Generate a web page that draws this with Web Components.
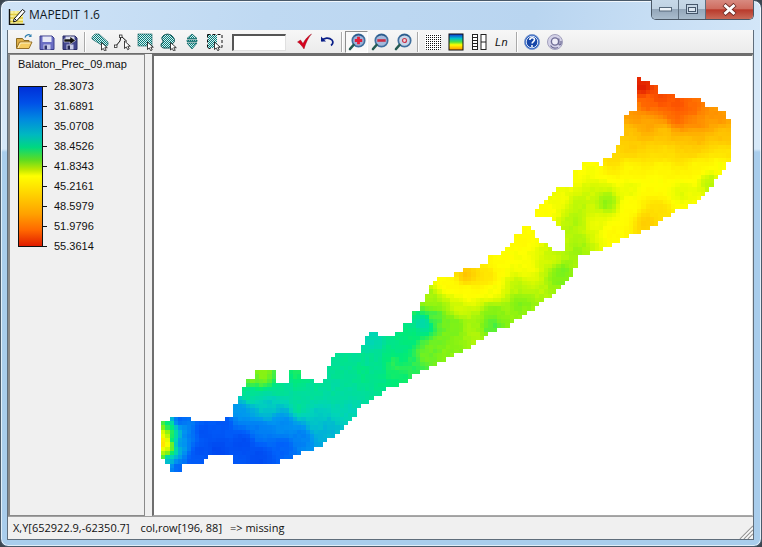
<!DOCTYPE html>
<html><head><meta charset="utf-8"><style>
html,body{margin:0;padding:0;background:#3c4650;width:762px;height:547px;overflow:hidden}
</style></head><body>
<app-window>
  <title-bar slot="title">MAPEDIT 1.6</title-bar>
  <tool-bar slot="tools">
    <tool-button icon="open"></tool-button><tool-button icon="save"></tool-button><tool-button icon="saveas"></tool-button>
    <tool-sep></tool-sep>
    <tool-button icon="sel1"></tool-button><tool-button icon="sel2"></tool-button><tool-button icon="sel3"></tool-button><tool-button icon="sel4"></tool-button><tool-button icon="sel5"></tool-button><tool-button icon="sel6"></tool-button>
    <tool-field></tool-field>
    <tool-button icon="check"></tool-button><tool-button icon="undo"></tool-button>
    <tool-sep></tool-sep>
    <tool-button icon="zin" pressed></tool-button><tool-button icon="zout"></tool-button><tool-button icon="zfit"></tool-button>
    <tool-sep></tool-sep>
    <tool-button icon="grid"></tool-button><tool-button icon="ramp"></tool-button><tool-button icon="cols"></tool-button><tool-button icon="ln"></tool-button>
    <tool-sep></tool-sep>
    <tool-button icon="help"></tool-button><tool-button icon="at"></tool-button>
  </tool-bar>
  <legend-panel slot="side" name="Balaton_Prec_09.map" values="28.3073,31.6891,35.0708,38.4526,41.8343,45.2161,48.5979,51.9796,55.3614"></legend-panel>
  <map-view slot="main"></map-view>
  <status-bar slot="status"><span>X,Y[652922.9,-62350.7]</span><span style="margin-left:11px">col,row[196, 88]</span><span style="margin-left:8px">=&gt; missing</span></status-bar>
</app-window>
<script>
const def=(n,css,html,extra)=>{customElements.define(n,class extends HTMLElement{
  constructor(){super();this.attachShadow({mode:'open'}).innerHTML='<style>'+css+'</style>'+html;}
  connectedCallback(){if(extra)extra.call(this,this.shadowRoot);}
});};

def('app-window',`
:host{display:block;width:762px;height:547px;box-sizing:border-box;position:relative;font-family:"Liberation Sans",Arial,sans-serif;}
.f{width:100%;height:100%;box-sizing:border-box;border-radius:8px;border:1px solid #4a5a6a;
 background:linear-gradient(#d6e8f8 0,#d6e8f8 148px,#a9cdec 151px,#a9cdec 100%);
 display:flex;flex-direction:column;padding:0 8px 7px 7px;
 box-shadow:inset 0 0 0 1px rgba(255,255,255,.65);}
.side-tint{flex:1;display:flex;flex-direction:column;min-height:0;background:#f0f0f0;outline:1px solid #5f6d7b;}
.w{flex:1;display:flex;min-height:0;background:#f0f0f0;}
`,`<div class="f"><slot name="title"></slot><div class="side-tint"><slot name="tools"></slot>
<div class="w"><slot name="side"></slot><slot name="main"></slot></div><slot name="status"></slot></div></div>`);

def('title-bar',`
:host{display:flex;align-items:flex-start;height:28px;flex:none;position:relative;font:12px "Open Sans","Liberation Sans",sans-serif;color:#10181f;
 margin:1px -7px 0 -6px;padding-left:6px;background:linear-gradient(100deg,#cfe3f7 0,#bfd9f2 35%,#b9d5f0 70%,#d3e6f8 100%);border-radius:7px 7px 0 0;}
svg.i{width:18px;height:18px;margin:5px 3px 0 0;flex:none}
span{margin-top:4px;line-height:17px}
.caps{position:absolute;right:6px;top:-2px;display:flex;height:20px;border:1px solid #4a5866;border-top:0;border-radius:0 0 5px 5px;overflow:hidden;box-sizing:border-box}
.caps i{display:flex;align-items:center;justify-content:center;box-sizing:border-box;height:100%}
.min{width:27px;background:linear-gradient(#c6d8e8 0,#c0d2e2 45%,#94a7ba 50%,#a9bccd 100%);border-right:1px solid #5e6e7e}
.max{width:27px;background:linear-gradient(#c6d8e8 0,#c0d2e2 45%,#94a7ba 50%,#a9bccd 100%);border-right:1px solid #5e6e7e}
.cl{width:47px;background:linear-gradient(#d88a80 0,#cf6d60 45%,#b93a2c 52%,#c96a58 100%)}
`,`<svg class="i" viewBox="0 0 18 18"><rect x="2" y="4" width="13" height="13" fill="#f8f2a0"/>
<path d="M2 7.500h13M2 11h13M2 14.500h13" stroke="#e0c93c" stroke-width="1.300"/><path d="M6 4v13M10 4v13" stroke="#e8d860" stroke-width=".8"/>
<path d="M1.500 2v15.500h15" fill="none" stroke="#111" stroke-width="1.400"/>
<path d="M6 12 14.500 2.500l2.500 2-8.500 9.500-3 .8z" fill="#fff" stroke="#111"/><path d="M6.500 11.500l2 2" stroke="#111"/></svg>
<span><slot></slot></span>
<div class="caps"><i class="min"><svg width="13" height="5"><rect x=".5" y=".5" width="12" height="3.500" fill="#eef3f8" stroke="#56687a"/></svg></i>
<i class="max"><svg width="12" height="11"><rect x=".5" y=".5" width="11" height="9" fill="#c6d6e5" stroke="#45566a"/><rect x="2.500" y="3.500" width="7" height="4" fill="#dde7f1" stroke="#45566a"/></svg></i>
<i class="cl"><svg width="15" height="13" viewBox="0 0 15 13"><path d="M2 1.500 13 11.500M13 1.500 2 11.500" stroke="#6b2b25" stroke-width="4.500"/><path d="M2.500 2 12.500 11M12.500 2 2.500 11" stroke="#fff" stroke-width="3"/></svg></i></div>`);

def('tool-bar',`
:host{display:flex;align-items:center;height:24px;flex:none;box-sizing:border-box;padding:1px 0 0 4px;
 background:linear-gradient(#f7f7f7,#ebebeb);border-bottom:1px solid #6d6d6d;}
`,`<slot></slot>`);

def('tool-sep',`:host{display:block;flex:none;width:7px;height:20px;position:relative}
i{display:block;width:1px;height:100%;background:#a9a9a9;margin-left:3px;box-shadow:1px 0 #fff}`,`<i></i>`);

def('tool-field',`:host{display:block;flex:none;width:54px;height:17px;margin:0 6px;box-sizing:border-box;background:#fff;
 border:1px solid #e0e0e0;border-top:2px solid #555;border-left:2px solid #555}`,``);

const T=`<pattern id="d" width="2" height="2" patternUnits="userSpaceOnUse"><rect width="2" height="2" fill="#d8f2f0"/><rect width="1" height="1" fill="#067a7a"/><rect x="1" y="1" width="1" height="1" fill="#067a7a"/></pattern>`;
const CUR=(x,y)=>`<path transform="translate(${x} ${y})" d="M0 0v7.500l1.800-1.600 1.400 2.800 1.500-.8-1.400-2.700h2.500z" fill="#fff" stroke="#111" stroke-width=".8"/>`;
const MAG=(c,sym)=>`<circle cx="10.500" cy="7.500" r="6.200" fill="${c}" stroke="#3f6f9e" stroke-width="1.700"/><path d="M6.500 3.300a6 6 0 0 1 8 0" stroke="#1f4f80" fill="none"/>${sym}<path d="M5.500 12 2 16" stroke="#245a52" stroke-width="2.600" stroke-linecap="round"/>`;
const ICONS={
open:`<path d="M1.500 15V5.500h6l1.500 2h5v2" fill="#e0b048" stroke="#8a6a20"/><path d="M1.500 15.500 4.500 9h12.500l-3 6.500z" fill="#f6cc60" stroke="#96702a"/><path d="M3 15l2.500-5h10" stroke="#fff3c4" fill="none"/><path d="M10 4.500c1-3 4-3.500 5.500-2" stroke="#2f7fb0" stroke-width="1.200" fill="none"/><path d="M16.500 1v3h-3z" fill="#2f7fb0"/>`,
save:`<path d="M2 3h12l2 2v11.500H2z" fill="#6a6ec4" stroke="#3a3c8a"/><rect x="4.500" y="3.500" width="9" height="5.500" fill="#e6e8f6"/><rect x="5.500" y="11.500" width="7" height="5" fill="#c9cce8"/><rect x="6.500" y="12.500" width="2.500" height="4" fill="#30336f"/>`,
saveas:`<path d="M2 3h12l2 2v11.500H2z" fill="#43478f" stroke="#2a2c66"/><rect x="4.500" y="3.500" width="9" height="5" fill="#d8dbf0"/><rect x="5.500" y="11.500" width="7" height="5" fill="#c9cce8"/><rect x="6.500" y="12.500" width="2.500" height="4" fill="#22254f"/><path d="M3 6h6V3.500l5.500 4-5.500 4V9H3z" fill="#111" stroke="#fff" stroke-width=".5"/>`,
sel1:`${T}<path d="M1 4 4 1h4l9 8v3l-3 2L4 8 1 6z" fill="url(#d)" stroke="#0a5c5c" stroke-width=".6"/>${CUR(10.500,9.500)}`,
sel2:`<path d="M1.500 13.500 6 8l1-5 6 5.500" fill="none" stroke="#111"/><rect x=".5" y="12" width="2.500" height="2.500" fill="#fff" stroke="#111" stroke-width=".7"/><rect x="5.500" y="2" width="2.500" height="2.500" fill="#fff" stroke="#111" stroke-width=".7"/>${CUR(10.500,8)}`,
sel3:`${T}<rect x="1" y="1" width="14" height="12" fill="url(#d)" stroke="#0a5c5c" stroke-width=".6"/>${CUR(10.500,9)}`,
sel4:`${T}<path d="M3 3c3-3 8-2 10 1 2 2 2 5 0 6-2 2 0 5-4 5-3 0-8 1-8-3 0-3 3-2 2-4S1 5 3 3z" fill="url(#d)" stroke="#0a5050"/>${CUR(10.500,9.500)}`,
sel5:`${T}<path d="M9 1l5 4.500H4zM4 7h10v1.500H4zM4 10h10l-5 6z" fill="url(#d)" stroke="#076464" stroke-width=".8"/>`,
sel6:`${T}<rect x="2" y="2" width="9" height="13" fill="url(#d)"/><path d="M1.500 1.500h14.500v13h-3M1.500 1.500V15.500h3" fill="none" stroke="#111" stroke-dasharray="3 2"/>${CUR(8.500,9)}`,
check:`<path d="M2.500 9 5.500 7l2.500 3.500C10 6.500 12.500 3.500 16.500 1c-3 3.500-5.500 8-7.500 15C7 13 5 10.500 2.500 9z" fill="#d8001c" stroke="#8d0012" stroke-width=".4"/>`,
undo:`<path d="M3 3.500v5h5" fill="#0a1f88" /><path d="M3.500 8C6 4.500 11 4 14 7c1.500 2 .8 4-1 5.500" fill="none" stroke="#0a1f88" stroke-width="1.700"/>`,
zin:MAG('#9cb2d8','<path d="M6.800 7.500h7.400M10.500 3.800v7.400" stroke="#e21f3a" stroke-width="2.800"/>'),
zout:MAG('#a3b9dc','<path d="M6.300 7.500h8.400" stroke="#c92c44" stroke-width="2.600"/>'),
zfit:MAG('#c6d6ea','<circle cx="10.500" cy="7.500" r="2" fill="#f2d4da" stroke="#c8374e" stroke-width="1.200"/>'),
grid:`<pattern id="g" width="2" height="2" patternUnits="userSpaceOnUse"><rect width="1" height="1" fill="#111"/></pattern><rect x="1" y="1" width="16" height="16" rx="2.500" fill="#fff"/><rect x="1" y="1" width="16" height="16" rx="2.500" fill="url(#g)"/>`,
ramp:`<defs><linearGradient id="r" x1="0" y1="0" x2="0" y2="1"><stop offset="0" stop-color="#1030d8"/><stop offset=".28" stop-color="#00c0c8"/><stop offset=".5" stop-color="#50e040"/><stop offset=".68" stop-color="#ffff00"/><stop offset="1" stop-color="#ff9000"/></linearGradient></defs><rect x="2" y="1" width="14" height="16" fill="url(#r)" stroke="#111"/>`,
cols:`<rect x="2.500" y="1.500" width="5" height="15" fill="#fff" stroke="#222"/><path d="M2.500 4.500h5M2.500 7.500h5M2.500 10.500h5M2.500 13.500h5" stroke="#222"/><rect x="11" y="1.500" width="5" height="15" fill="#fff" stroke="#222"/><path d="M11 9h5" stroke="#222"/>`,
ln:``,
help:`<circle cx="9" cy="9" r="7.500" fill="#2a5fc0" stroke="#7d9bcf"/><circle cx="9" cy="9" r="5.800" fill="#1747a8" stroke="#dce6f6"/><path d="M6.800 7c0-3 4.700-3 4.700-.3 0 1.900-2.400 1.800-2.400 3.700" fill="none" stroke="#fff" stroke-width="1.600"/><circle cx="9" cy="13" r="1" fill="#fff"/>`,
at:`<circle cx="9" cy="9" r="7.500" fill="#d4d2e8" stroke="#a3a1bd"/><circle cx="9" cy="8.500" r="3.600" fill="#efeef8" stroke="#6f6d96" stroke-width="1.400"/><path d="M12.800 5.500v5c0 2 2.200 1.500 2.200 0V8M12 14.500c-3 1.200-6 .5-7.500-2" fill="none" stroke="#6f6d96" stroke-width="1.300"/>`
};
customElements.define('tool-button',class extends HTMLElement{
  constructor(){super();const s=this.attachShadow({mode:'open'});
    const n=this.getAttribute('icon');
    const body=n==='ln'?`<span>Ln</span>`:`<svg width="18" height="18" viewBox="0 0 18 18">${ICONS[n]}</svg>`;
    s.innerHTML=`<style>:host{display:flex;align-items:center;justify-content:center;flex:none;width:23px;height:22px;box-sizing:border-box}
    :host([pressed]){background:#f9f9f9;border:1px solid;border-color:#8e8e8e #fff #fff #8e8e8e}
    span{font:italic 11px "Liberation Sans",sans-serif;color:#111;letter-spacing:.5px}svg{display:block}</style>${body}`;}
});

def('legend-panel',`
:host{display:block;flex:none;width:137px;box-sizing:border-box;background:#f0f0f0;border:1px solid #8a8a8a;border-left-width:2px;border-top-width:1px;
 font:11px "Liberation Sans",Arial,sans-serif;color:#111;padding:3px 0 0 8px;margin-right:7px;}
.n{line-height:13px;height:14px;white-space:pre;}
.l{display:flex;margin-top:14px;}
.bar{width:23px;height:159px;flex:none;border:1px solid #111;background:linear-gradient(#0030d8 0,#0050e8 10%,#0088e0 20%,#00b8c0 30%,#00d880 38%,#60dc20 46%,#c0e800 52%,#ffff00 56%,#ffd000 68%,#ffa000 80%,#ff6800 90%,#e01c00 100%)}
.t{width:4px;height:161px;flex:none;display:flex;flex-direction:column;justify-content:space-between}
.t i{display:block;height:1px;background:#111}
.v{margin-left:7px;margin-top:-7px;flex:none;display:flex;flex-direction:column}
.v div{height:20px;flex:none;line-height:14px}
`,`<div class="n"></div><div class="l"><div class="bar"></div><div class="t"></div><div class="v"></div></div>`,function(s){
  s.querySelector('.n').textContent=this.getAttribute('name');
  const vs=this.getAttribute('values').split(',');
  s.querySelector('.t').innerHTML=vs.map(()=>'<i></i>').join('');
  s.querySelector('.v').innerHTML=vs.map(v=>`<div>${v}</div>`).join('');
});

def('status-bar',`
:host{display:flex;align-items:center;flex:none;height:23px;box-sizing:border-box;background:#f0f0f0;border-top:1px solid #a0a0a0;position:relative;
 font:11px "Open Sans","Liberation Sans",sans-serif;color:#111;padding:0 0 1px 5px;white-space:pre;}
svg{position:absolute;right:0;bottom:0}
`,`<slot></slot><svg width="14" height="14" viewBox="0 0 14 14"><path d="M1 14 14 1M5 14 14 5M9 14 14 9" stroke="#9a9a9a" stroke-width="1.200"/><path d="M2.500 14 14 2.500M6.500 14 14 6.500M10.500 14 14 10.500" stroke="#fff"/></svg>`);

/* ---- map ---- */
const OUT=[[640,77],[642,81],[655,85],[661,93],[674,94],[674,98],[700,98],[704,103],[704,107],[717,107],[726,114],[730,120],[730,157],[725,168],[717,177],[712,188],[703,197],[690,205],[673,212],[657,225],[647,230],[623,238],[610,247],[585,255],[577,257],[575,273],[560,287],[537,307],[507,327],[490,332],[477,342],[460,352],[437,363],[417,373],[410,380],[385,390],[370,400],[358,410],[352,418],[342,430],[332,438],[315,448],[293,457],[277,462],[233,462],[233,457],[208,457],[200,465],[182,465],[182,470],[170,470],[170,465],[165,465],[161,457],[161,423],[170,420],[170,415],[191,415],[191,419],[217,419],[221,423],[222,419],[234,418],[234,406],[238,398],[243,389],[247,383],[247,377],[255,377],[255,372],[277,372],[277,381],[289,381],[289,372],[302,372],[302,377],[315,377],[315,381],[324,381],[328,368],[333,358],[336,355],[358,355],[360,351],[367,338],[372,333],[378,333],[382,337],[402,332],[405,325],[413,320],[413,312],[422,307],[423,298],[430,287],[440,278],[453,275],[465,269],[478,269],[478,265],[490,263],[490,257],[502,252],[512,243],[512,235],[520,233],[527,222],[537,233],[537,240],[547,245],[553,250],[563,252],[567,240],[560,225],[547,217],[537,217],[537,210],[547,200],[558,188],[572,187],[572,171],[583,171],[583,162],[597,162],[602,167],[603,158],[613,154],[618,145],[623,135],[623,125],[627,112],[640,107],[636,102],[636,82]];
const CP=[[642,85,1],[660,97,.93],[677,105,.92],[690,108,.88],[677,115,.88],[697,122,.82],[717,115,.8],[647,105,.88],[637,115,.8],[647,122,.77],[630,132,.72],[663,135,.72],[697,138,.74],[723,138,.72],[630,148,.7],[663,152,.66],[693,148,.7],[723,152,.64],[613,158,.66],[630,168,.58],[663,168,.58],[697,165,.58],[720,165,.55],[710,182,.48],[680,192,.52],[657,182,.55],[630,188,.53],[607,202,.44],[590,192,.5],[590,168,.55],[573,178,.55],[560,198,.54],[580,205,.48],[573,222,.47],[577,248,.45],[597,222,.53],[630,208,.56],[657,212,.65],[647,222,.7],[613,232,.57],[547,212,.56],
[523,240,.57],[527,267,.55],[550,260,.5],[560,273,.42],[573,243,.48],[500,263,.56],[467,275,.72],[487,277,.64],[447,283,.57],[467,293,.56],[493,290,.55],[517,287,.48],[520,303,.43],[430,300,.46],[460,310,.5],[493,313,.43],[433,317,.4],[423,323,.3],[453,323,.42],[493,327,.4],[413,337,.36],[447,340,.43],[473,337,.47],[373,340,.3],[403,347,.35],[427,350,.42],[453,353,.44],[367,363,.33],[393,367,.38],[377,373,.34],
[263,375,.44],[250,380,.42],[297,375,.37],[250,393,.33],[283,387,.33],[317,387,.33],[350,370,.33],[363,370,.35],[337,393,.32],[300,407,.33],[267,407,.28],[240,413,.2],[283,423,.18],[317,420,.28],[347,413,.3],[260,433,.15],[300,437,.16],[327,430,.25],[243,443,.02],[283,447,.1],[260,457,.02],[223,423,.06],[203,433,.03],[217,450,0],[200,450,.03],[190,437,.14],[180,420,.1],[193,460,.07],[177,467,.1],[180,443,.18],[173,440,.3],[167,427,.36],[168,460,.25],[167,443,.55],[162,443,.78],[163,433,.55],[163,453,.48]];
const STOPS=[[0,[0,70,240]],[.1,[0,96,250]],[.2,[0,150,240]],[.3,[0,212,185]],[.38,[0,235,120]],[.46,[130,242,20]],[.52,[215,250,0]],[.56,[255,255,0]],[.7,[255,205,0]],[.8,[255,150,0]],[.9,[255,90,0]],[1,[225,30,0]]];
function lift(t){const b=Math.max(0,1-Math.abs(t-.42)/.16);return t+.03*b;}
function color(t){t=Math.max(0,Math.min(1,lift(t)));for(let i=1;i<STOPS.length;i++){if(t<=STOPS[i][0]){const[a,c1]=STOPS[i-1],[b,c2]=STOPS[i],k=(t-a)/(b-a);return`rgb(${c1.map((v,j)=>Math.round(v+(c2[j]-v)*k)).join(',')})`;}}return'rgb(225,30,0)';}
function inside(x,y){let c=false;for(let i=0,j=OUT.length-1;i<OUT.length;j=i++){const[xi,yi]=OUT[i],[xj,yj]=OUT[j];if((yi>y)!==(yj>y)&&x<(xj-xi)*(y-yi)/(yj-yi)+xi)c=!c;}return c;}
function val(x,y){let s=0,w=0;for(const[a,b,v]of CP){const d=(x-a)*(x-a)+(y-b)*(y-b)+24;const q=Math.pow(d,-1.6);s+=q*v;w+=q;}return s/w;}
function noise(i,j){const h=Math.sin(i*12.9898+j*78.233)*43758.5453;return h-Math.floor(h)-.5;}
def('map-view',`
:host{display:block;flex:1;min-width:0;box-sizing:border-box;border-left:2px solid #6e6e6e;border-top:2px solid #6e6e6e;border-right:1px solid #e4e4e4;border-bottom:1px solid #a8a8a8;background:#fff;overflow:hidden}
canvas{display:block}
`,`<canvas width="600" height="459"></canvas>`,function(s){
  const g=s.querySelector('canvas').getContext('2d');const ox=152.5,oy=55.5,C=4.25,px=154,py=56;
  for(let j=0;j<110;j++)for(let i=0;i<145;i++){
    const x=ox+i*C,y=oy+j*C,cx=x+C/2,cy=y+C/2;
    if(!inside(cx,cy))continue;
    g.fillStyle=color(val(cx,cy)+noise(i,j)*.016);
    const l=Math.round(x-px),t=Math.round(y-py);
    g.fillRect(l,t,Math.round(x-px+C)-l,Math.round(y-py+C)-t);
  }
});
</script>
</body></html>
